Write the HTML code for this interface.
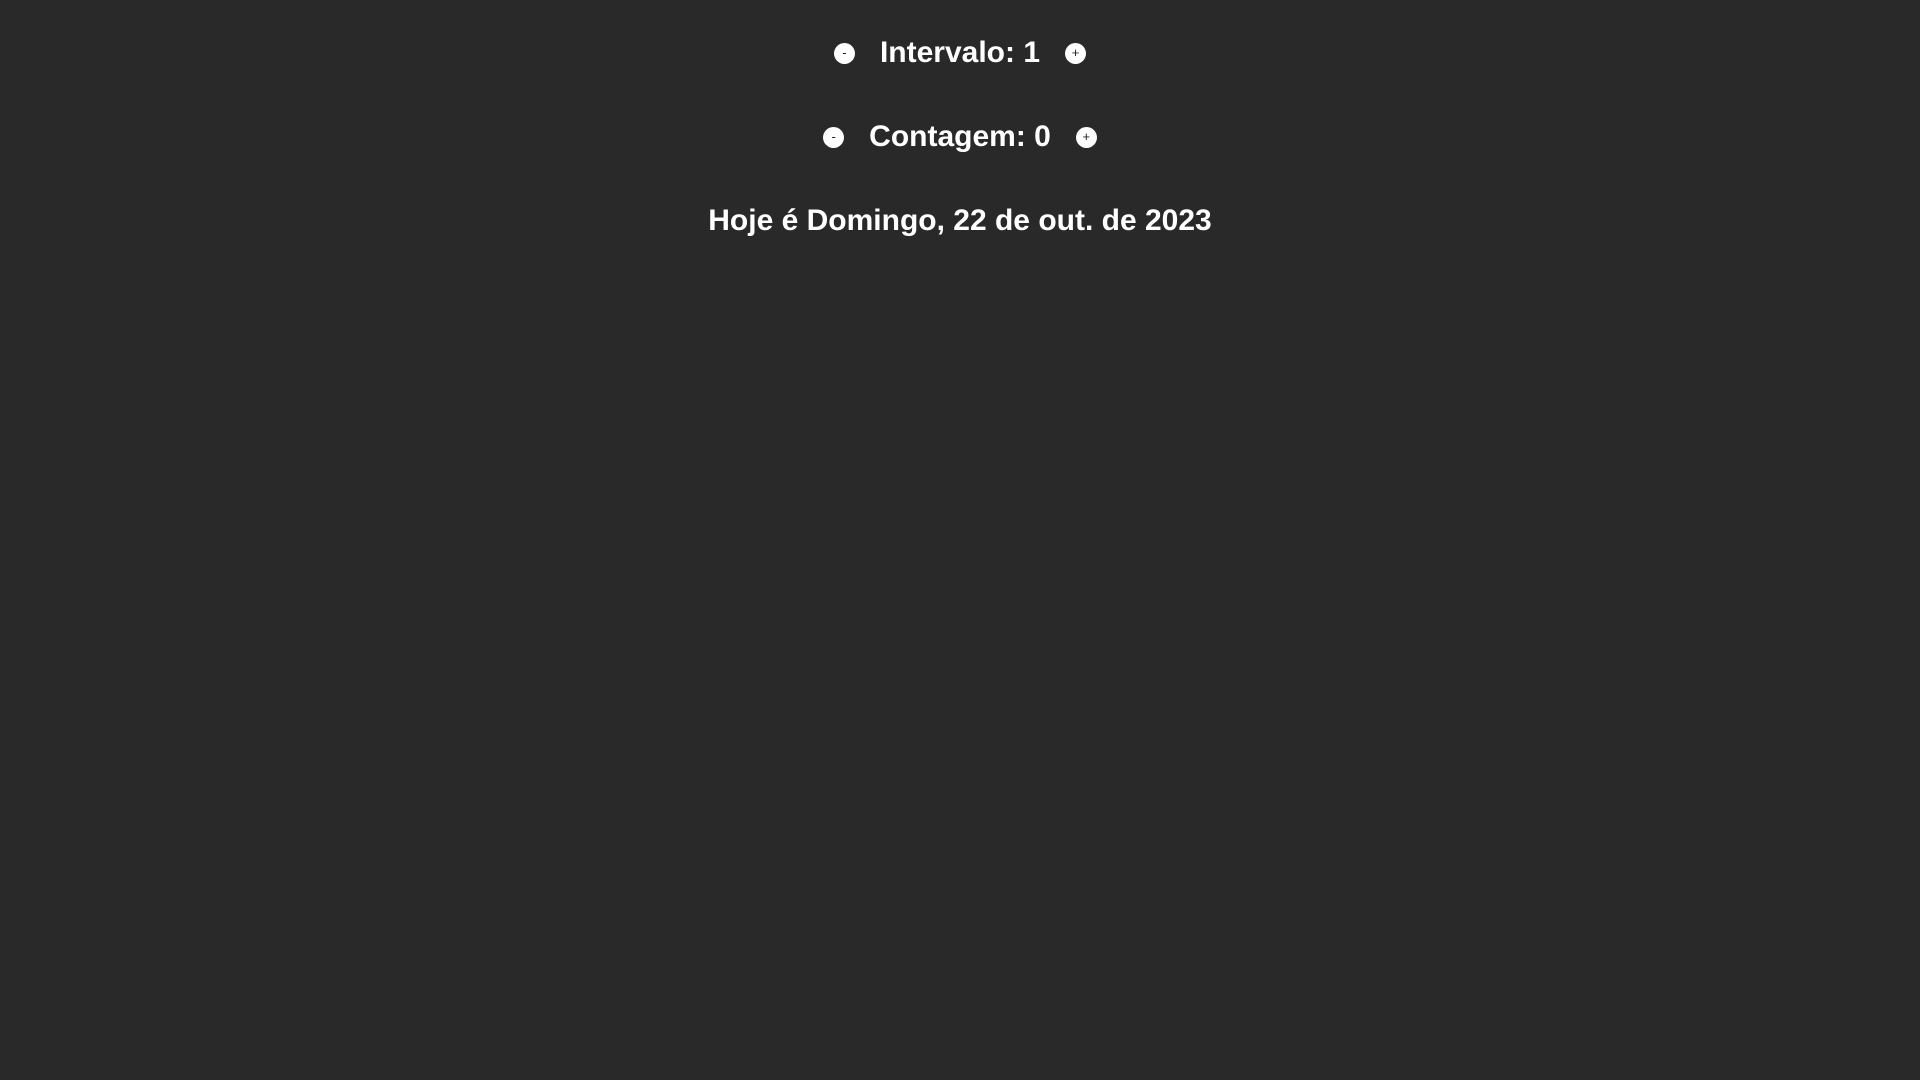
<!DOCTYPE html>
<html><head><meta charset="utf-8"><style>
html,body{margin:0;padding:0;background:#292929;width:1920px;height:1080px;overflow:hidden}
body{font-family:"Liberation Sans",Arial,sans-serif;color:#fff;font-weight:bold}
.row{position:absolute;left:0;width:1920px;height:84px;display:flex;align-items:center;justify-content:center;font-size:30px;line-height:84px}
.b{width:21px;height:21px;border-radius:50%;background:#fff;color:#222;font-size:13px;font-weight:normal;line-height:20px;text-align:center;margin:0 25px}
</style></head><body>
<div class="row" style="top:11px"><div class="b">-</div><span>Intervalo: 1</span><div class="b">+</div></div>
<div class="row" style="top:95px"><div class="b">-</div><span>Contagem: 0</span><div class="b">+</div></div>
<div class="row" style="top:179px"><span>Hoje é Domingo, 22 de out. de 2023</span></div>
</body></html>
